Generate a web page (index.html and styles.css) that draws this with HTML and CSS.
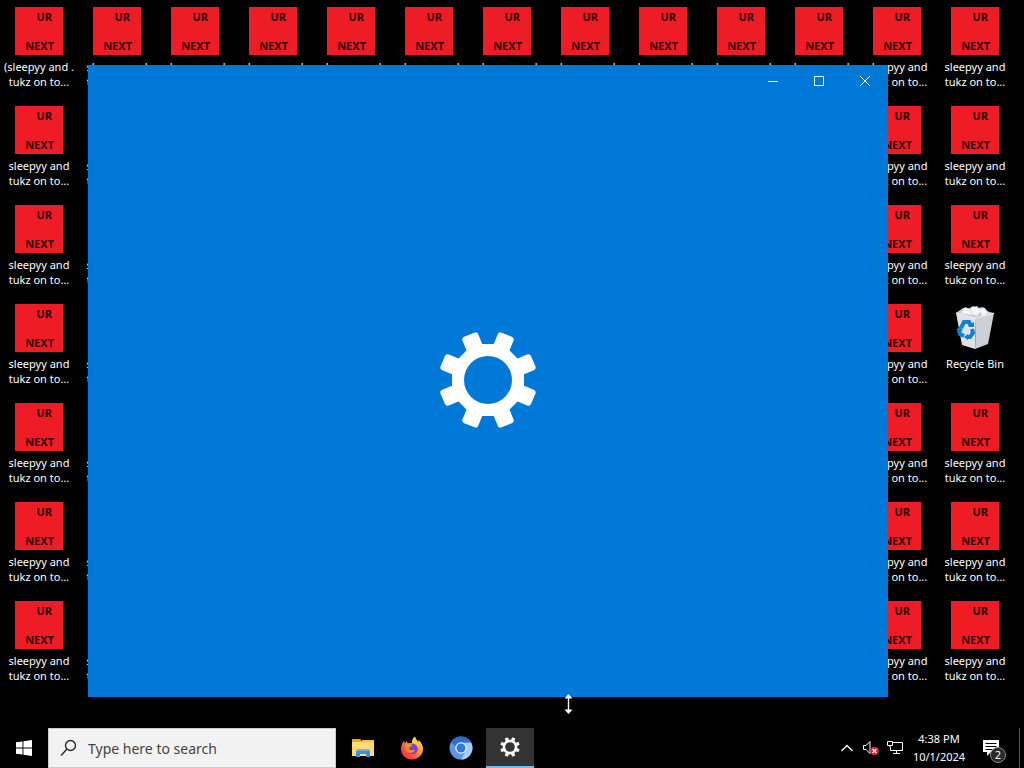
FILE: index.html
```html
<!DOCTYPE html>
<html lang="en">
<head>
    <meta charset="utf-8"/>
    <meta name="viewport" content="width=device-width, initial-scale=1">
    <title>Desktop</title>
    <link rel="stylesheet" href="styles.css">
</head>
<body>
    <svg class="symbols" aria-hidden="true">
        <symbol id="gear" viewBox="0 0 100 100">
            <mask id="gear-hole">
                <rect width="100" height="100" fill="white"/>
                <circle cx="50" cy="50" r="24" fill="black"/>
            </mask>
            <g mask="url(#gear-hole)" fill="currentColor">
                <path d="M35 14h30L86 35v30L65 86H35L14 65V35z"/>
                <rect x="41.500" y="1" width="17" height="98" rx="3" transform="rotate(22.5 50 50)"/>
                <rect x="41.500" y="1" width="17" height="98" rx="3" transform="rotate(67.5 50 50)"/>
                <rect x="41.500" y="1" width="17" height="98" rx="3" transform="rotate(112.5 50 50)"/>
                <rect x="41.500" y="1" width="17" height="98" rx="3" transform="rotate(157.5 50 50)"/>
            </g>
        </symbol>
    </svg>

    <main class="desktop">
        <div class="shortcuts" id="shortcuts"></div>

        <template id="shortcut-template">
            <button class="shortcut" type="button">
                <span class="tile"><span>UR</span><span>NEXT</span></span>
                <span class="label"><span class="name">sleepyy and</span><br>tukz on to...</span>
            </button>
        </template>

        <template id="recycle-template">
            <button class="shortcut" type="button">
                <svg class="bin" viewBox="0 0 48 48" aria-hidden="true">
                    <path d="M5 9l7-5 5 1 5-3 5 2 5-1 4 4 6 2-8 6-21-1z" fill="#c9cccf"/>
                    <path d="M10 9l4-6 5 2 2 6zM20 4l6-2 4 5-4 5-5-2zM29 5l5-1 3 5-6 4z" fill="#f3f4f5"/>
                    <path d="M5 9l20 5-1 31-13-4z" fill="#dfe2e5"/>
                    <path d="M43 9l-18 5-1 31 13-5z" fill="#cdd0d4"/>
                    <path d="M5 9l20 5 18-5" fill="none" stroke="#eceeef"/>
                    <path d="M10 24l3-6h5l2 4M21 25l1 4-3 4h-3M13 32l-4-2-1-4" fill="none" stroke="#0f7fd0" stroke-width="4"/>
                    <path d="M17 23h6v-5zM17 30v6l-4-3zM5 26l4-4 3 5z" fill="#0f7fd0"/>
                </svg>
                <span class="label">Recycle Bin</span>
            </button>
        </template>

        <section class="window" aria-label="Settings">
            <header class="titlebar">
                <button type="button" aria-label="Minimize">
                    <svg viewBox="0 0 12 12"><path d="M1 6.500h10"/></svg>
                </button>
                <button type="button" aria-label="Maximize">
                    <svg viewBox="0 0 12 12"><path d="M1.500 1.500h9v9h-9z"/></svg>
                </button>
                <button type="button" aria-label="Close">
                    <svg viewBox="0 0 12 12"><path d="M1 1l10 10M11 1L1 11"/></svg>
                </button>
            </header>
            <div class="splash">
                <svg class="splash-gear" viewBox="0 0 100 100"><use href="#gear"/></svg>
            </div>
        </section>

        <svg class="cursor" viewBox="0 0 11 22" aria-hidden="true">
            <path d="M5.500 1l4 4.500H6.200v11h3.300l-4 4.500-4-4.500h3.300v-11H1.500z" fill="white"/>
        </svg>
    </main>

    <footer class="taskbar">
        <button class="task" type="button" aria-label="Start">
            <svg width="16" height="16" viewBox="0 0 16 16" fill="white">
                <path d="M0 2.300l6.500-.9v6.100H0zM7.400 1.200L16 0v7.500H7.400zM0 8.400h6.500v6.200L0 13.700zM7.400 8.400H16V16l-8.600-1.200z"/>
            </svg>
        </button>

        <label class="search">
            <svg width="18" height="18" viewBox="0 0 18 18" fill="none" stroke="#222" stroke-width="1.300">
                <circle cx="10.500" cy="6.500" r="5"/>
                <path d="M7 10L1 16.500"/>
            </svg>
            <input type="text" placeholder="Type here to search" aria-label="Search">
        </label>

        <button class="task" type="button" aria-label="File Explorer">
            <svg width="24" height="24" viewBox="0 0 24 24">
                <path d="M1 3h8l2 2h12v6H1z" fill="#e9a920"/>
                <path d="M1 6h22v14H1z" fill="#fddc73"/>
                <path d="M11 4h12v2H11z" fill="#f5c33b"/>
                <path d="M5 21v-6l2-2h10l2 2v6h-4v-3H9v3z" fill="#3a93d8"/>
                <path d="M6 13h12v2H6z" fill="#65b5ec"/>
            </svg>
        </button>
        <button class="task" type="button" aria-label="Firefox">
            <svg width="24" height="24" viewBox="0 0 24 24">
                <defs>
                    <linearGradient id="flame" x1="1" y1="0" x2="0" y2="1">
                        <stop offset="0" stop-color="#fff04a"/>
                        <stop offset=".4" stop-color="#ff9a26"/>
                        <stop offset=".7" stop-color="#ff4a45"/>
                        <stop offset="1" stop-color="#e8156f"/>
                    </linearGradient>
                </defs>
                <path d="M12 23.500C5.500 23.500 1 18.800 1 13c0-3.500 1.500-6.500 3-8.500l.8 3L6.500 5l1.300 2.300L12 7c0-3 1-5.500 3-6.500.3 2.500 2 3.500 3.500 5.500V3.800c3 2.700 4.500 6 4.500 9.200 0 6-5 10.500-11 10.500z" fill="url(#flame)"/>
                <circle cx="12.500" cy="13" r="5.300" fill="#7542e5"/>
                <path d="M5 9c2-2 5-2 7.500.2L10 11c-1.500 1-1.500 2.500.5 3 2 .5 3-.5 4.500 0-1 3-6 4-8.500 1.500C5 14 4.500 11.500 5 9z" fill="#ff8a2b"/>
                <path d="M12 7c3-.5 5.500 1.500 6 4.500 1-2 .5-4-.5-5.500L15 1c-2 1.500-3 3.500-3 6z" fill="#ffd23c"/>
            </svg>
        </button>
        <button class="task" type="button" aria-label="Chromium">
            <svg width="24" height="24" viewBox="0 0 24 24">
                <circle cx="12" cy="12" r="11.500" fill="#5a96f0"/>
                <path d="M12 6.500h10.100A11.500 11.500 0 0 1 12 23.500l4.800-8.800z" fill="#a9cbf8"/>
                <path d="M2 6.300A11.500 11.500 0 0 1 22.100 6.500H12a5.500 5.500 0 0 0-5.200 4z" fill="#2f6bd0"/>
                <circle cx="12" cy="12" r="5.800" fill="#e8f1ff"/>
                <circle cx="12" cy="12" r="4.500" fill="#2f78e6"/>
            </svg>
        </button>
        <button class="task active" type="button" aria-label="Settings">
            <svg class="task-gear" viewBox="0 0 100 100"><use href="#gear"/></svg>
        </button>

        <div class="tray">
            <button type="button" aria-label="Show hidden icons">
                <svg width="12" height="16" viewBox="0 0 12 16" fill="none" stroke="white" stroke-width="1.300"><path d="M.5 11L6 5.500l5.500 5.500"/></svg>
            </button>
            <button type="button" aria-label="Volume">
                <svg width="18" height="16" viewBox="0 0 18 16">
                    <path d="M1.500 5.500H4l4-4v12l-4-4H1.500z" fill="none" stroke="white"/>
                    <circle cx="12.500" cy="11" r="4.300" fill="#d9232e"/>
                    <path d="M10.500 9l4 4M14.500 9l-4 4" stroke="white" stroke-width="1.300"/>
                </svg>
            </button>
            <button type="button" aria-label="Network">
                <svg width="16" height="16" viewBox="0 0 16 16" fill="none" stroke="white">
                    <path d="M6 2.500h9.500v8H3.500V7M9.500 10.500v3M6 13.500h7M.5 1.500h5v4h-5zM3 5.500V7"/>
                </svg>
            </button>
            <button class="clock" type="button"><time datetime="2024-10-01T16:38">4:38 PM<br>10/1/2024</time></button>
            <button class="notifications" type="button" aria-label="Notifications">
                <svg width="18" height="18" viewBox="0 0 18 18">
                    <path d="M1 1h16v12H9l-4 4v-4H1z" fill="white"/>
                    <path d="M3.500 4.500h11M3.500 7.500h11M3.500 10.500h7" stroke="black"/>
                </svg>
                <span class="badge">2</span>
            </button>
            <button class="show-desktop" type="button" aria-label="Show desktop"></button>
        </div>
    </footer>

    <script src="script.js"></script>
</body>
</html>
```
FILE: styles.css
```css
* {
    box-sizing: border-box;
}

body {
    margin: 0;
    height: 100vh;
    display: flex;
    flex-direction: column;
    background: #000;
    color: white;
    font-family: 'Noto Sans', 'Open Sans', sans-serif;
    font-size: 11px;
    overflow: hidden;
}

button {
    margin: 0;
    padding: 0;
    border: none;
    background: none;
    color: inherit;
    font: inherit;
}

.symbols {
    position: absolute;
    width: 0;
    height: 0;
}

/* desktop */
.desktop {
    position: relative;
    flex: 1;
    min-height: 0;
}

.shortcuts {
    display: grid;
    grid-template-columns: repeat(13, 78px);
    grid-auto-rows: 99px;
    padding-top: 7px;
}

.shortcut {
    display: flex;
    flex-direction: column;
    align-items: center;
    gap: 4px;
    white-space: nowrap;
}

.tile {
    display: flex;
    flex-direction: column;
    justify-content: space-between;
    align-items: flex-end;
    width: 48px;
    height: 48px;
    padding: 4px 9px 3px 0;
    background: #ee1c25;
    color: #2c0305;
    font-weight: bold;
    line-height: 12px;
}

.tile span:first-child {
    padding-right: 2px;
}

.label {
    line-height: 15px;
    text-align: center;
}

.bin {
    width: 48px;
    height: 48px;
}

/* settings window */
.window {
    position: absolute;
    left: 88px;
    top: 65px;
    width: 800px;
    height: 632px;
    display: flex;
    flex-direction: column;
    background: #0078d7;
}

.titlebar {
    display: flex;
    justify-content: flex-end;
    height: 32px;
}

.titlebar button {
    display: flex;
    justify-content: center;
    align-items: center;
    width: 46px;
}

.titlebar svg {
    width: 12px;
    height: 12px;
    fill: none;
    stroke: white;
}

.splash {
    flex: 1;
    display: flex;
    justify-content: center;
    align-items: center;
    padding-bottom: 34px;
}

.splash-gear {
    width: 100px;
    height: 100px;
}

.cursor {
    position: absolute;
    left: 563px;
    top: 693px;
    width: 11px;
    height: 22px;
}

/* taskbar */
.taskbar {
    display: flex;
    height: 40px;
    background: #000;
}

.task {
    display: flex;
    justify-content: center;
    align-items: center;
    width: 48px;
    margin-right: 1px;
}

.task:first-child {
    margin-right: 0;
}

.task.active {
    background: #333;
    border-bottom: 2px solid #76b9ed;
}

.task-gear {
    width: 20px;
    height: 20px;
}

.search {
    display: flex;
    align-items: center;
    gap: 10px;
    width: 288px;
    margin-right: 3px;
    padding-left: 11px;
    background: #f2f2f2;
    border: 1px solid #ccc;
}

.search input {
    flex: 1;
    min-width: 0;
    padding: 0;
    border: none;
    outline: none;
    background: none;
    color: #333;
    font: 14px 'Noto Sans', 'Open Sans', sans-serif;
}

.search input::placeholder {
    color: #444;
}

.tray {
    display: flex;
    align-items: stretch;
    margin-left: auto;
}

.tray button {
    display: flex;
    justify-content: center;
    align-items: center;
    width: 24px;
}

.tray .clock {
    width: 64px;
    line-height: 18px;
    text-align: center;
}

.tray .notifications {
    position: relative;
    width: 48px;
    padding-right: 8px;
}

.badge {
    position: absolute;
    left: 19px;
    top: 19px;
    width: 16px;
    height: 16px;
    border: 1px solid #888;
    border-radius: 50%;
    background: #2b2b2b;
    line-height: 14px;
    text-align: center;
}

.tray .show-desktop {
    width: 5px;
    border-left: 1px solid #555;
}
```
FILE: script.js
```js
const COLUMNS = 13;
const ROWS = 7;
const RECYCLE_BIN = { row: 3, column: 12 };

const grid = document.getElementById('shortcuts');
const shortcut = document.getElementById('shortcut-template');
const recycle = document.getElementById('recycle-template');

for (let row = 0; row < ROWS; row++) {
    for (let column = 0; column < COLUMNS; column++) {
        const isBin = row === RECYCLE_BIN.row && column === RECYCLE_BIN.column;
        const source = isBin ? recycle : shortcut;
        grid.appendChild(source.content.cloneNode(true));
    }
}

// the first shortcut has a longer name than the rest
grid.querySelector('.name').textContent = '(sleepyy and .';
```
